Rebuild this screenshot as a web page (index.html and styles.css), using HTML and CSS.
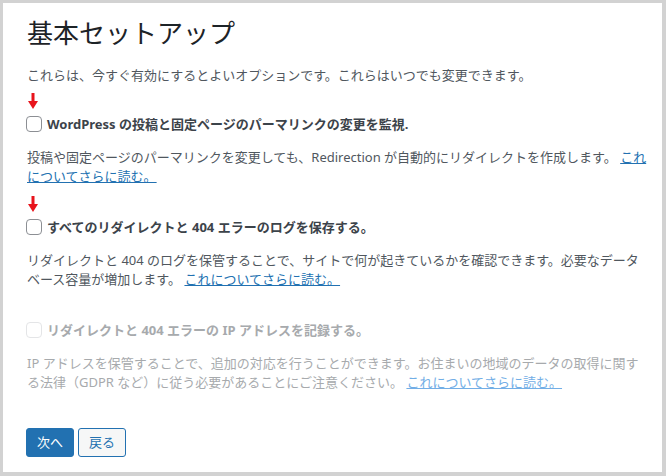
FILE: index.html
```html
<!DOCTYPE html>
<html lang="ja">
<head>
<meta charset="utf-8">
<link rel="stylesheet" href="styles.css">
</head>
<body>
<div class="frame">
  <h1 class="title">基本セットアップ</h1>
  <p class="intro">これらは、今すぐ有効にするとよいオプションです。これらはいつでも変更できます。</p>

  <div class="option first">
    <div class="arrow"><svg width="10" height="16" viewBox="0 0 10 16"><rect x="3.5" y="0" width="3" height="9" fill="#e8141c"/><polygon points="0,8 10,8 5,16" fill="#e8141c"/></svg></div>
    <label class="row"><span class="box"></span><span class="label">WordPress の投稿と固定ページのパーマリンクの変更を監視.</span></label>
    <p class="desc">投稿や固定ページのパーマリンクを変更しても、Redirection が自動的にリダイレクトを作成します。 <a href="#" class="link">これについてさらに読む。</a></p>
  </div>

  <div class="option">
    <div class="arrow"><svg width="10" height="16" viewBox="0 0 10 16"><rect x="3.5" y="0" width="3" height="9" fill="#e8141c"/><polygon points="0,8 10,8 5,16" fill="#e8141c"/></svg></div>
    <label class="row"><span class="box"></span><span class="label">すべてのリダイレクトと 404 エラーのログを保存する。</span></label>
    <p class="desc">リダイレクトと 404 のログを保管することで、サイトで何が起きているかを確認できます。必要なデータベース容量が増加します。 <a href="#" class="link">これについてさらに読む。</a></p>
  </div>

  <div class="option disabled">
    <div class="arrow"></div>
    <label class="row"><span class="box"></span><span class="label">リダイレクトと 404 エラーの IP アドレスを記録する。</span></label>
    <p class="desc narrow">IP アドレスを保管することで、追加の対応を行うことができます。お住まいの地域のデータの取得に関する法律（GDPR など）に従う必要があることにご注意ください。 <a href="#" class="link">これについてさらに読む。</a></p>
  </div>

  <div class="actions">
    <button class="btn primary">次へ</button>
    <button class="btn secondary">戻る</button>
  </div>
</div>
</body>
</html>
```
FILE: styles.css
```css
html, body {
  margin: 0;
  padding: 0;
  background: #d2d2d2;
}
body {
  font-family: "Noto Sans", "Noto Sans CJK JP", sans-serif;
  font-size: 13px;
  color: #50575e;
}
.frame {
  box-sizing: border-box;
  width: 666px;
  height: 476px;
  border: 3px solid #d2d2d2;
  border-right-width: 4px;
  border-bottom-width: 4px;
  background: #fff;
  padding: 13px 15px 0 24px;
}
.title {
  margin: 0;
  font-size: 26px;
  line-height: 34px;
  font-weight: 400;
  color: #1d2327;
}
.intro {
  margin: 16px 0 0;
  line-height: 19.5px;
}
.option {
  margin-top: 9px;
}
.option.first {
  margin-top: 7px;
}
.arrow {
  height: 16px;
  margin-bottom: 5px;
  padding-left: 1px;
}
.arrow svg {
  display: block;
}
.row {
  display: flex;
  align-items: center;
  height: 20px;
}
.box {
  box-sizing: border-box;
  width: 16px;
  height: 16px;
  margin-left: -1px;
  margin-right: 5px;
  border: 1px solid #8c8f94;
  border-radius: 4px;
  background: #fff;
  flex: none;
}
.label {
  font-weight: 700;
  color: #3c434a;
}
.desc {
  margin: 14px 0 0;
  line-height: 19.5px;
}
.desc.narrow {
  margin-right: 8px;
}
.link {
  color: #2271b1;
  text-decoration: underline;
}
.disabled .box {
  border-color: #e4e5e7;
}
.disabled .label {
  color: #a7aaad;
}
.disabled .desc {
  color: #a7aaad;
}
.disabled .link {
  color: #72aee6;
}
.actions {
  display: flex;
  gap: 4px;
  margin-top: 35px;
  margin-left: -1px;
}
.btn {
  box-sizing: border-box;
  height: 29px;
  padding: 0 10px;
  border-radius: 3px;
  font-family: "Noto Sans", "Noto Sans CJK JP", sans-serif;
  font-size: 13px;
  line-height: 27px;
  border: 1px solid #2271b1;
  cursor: pointer;
}
.primary {
  background: #2271b1;
  color: #fff;
}
.secondary {
  background: #f6f7f7;
  color: #2271b1;
}
```
